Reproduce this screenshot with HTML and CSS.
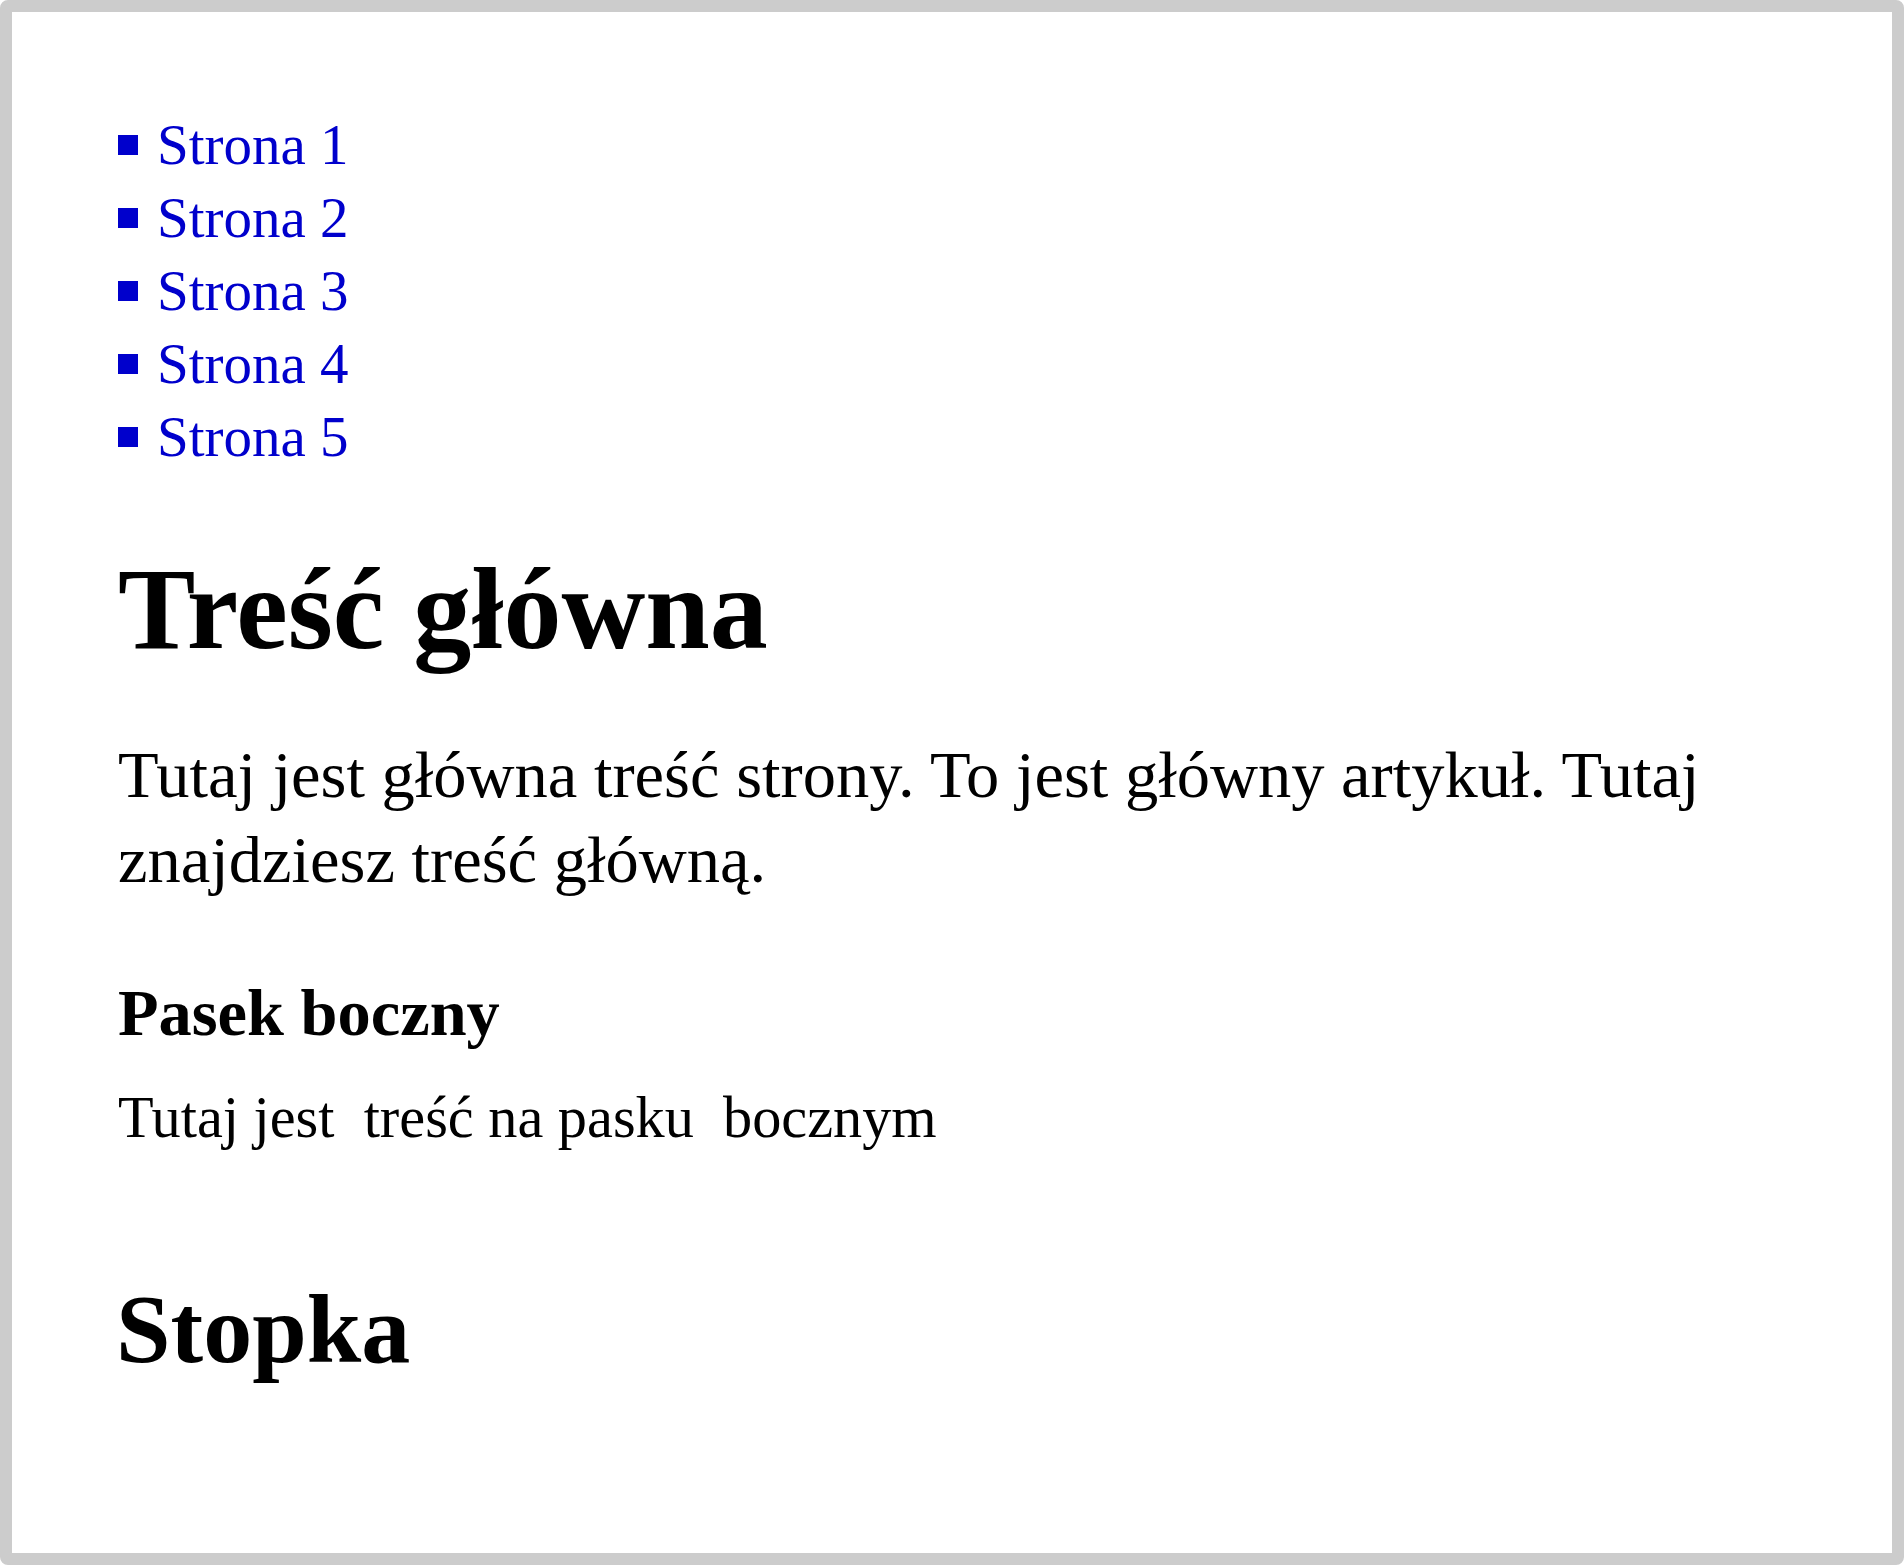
FILE: index.html
```html
<!DOCTYPE html>
<html lang="pl">
<head>
<meta charset="utf-8">
<title>Strona</title>
<link rel="stylesheet" href="styles.css">
</head>
<body>
<nav class="nav">
  <ul class="nav-list">
    <li class="nav-item"><a class="nav-link" href="#">Strona 1</a></li>
    <li class="nav-item"><a class="nav-link" href="#">Strona 2</a></li>
    <li class="nav-item"><a class="nav-link" href="#">Strona 3</a></li>
    <li class="nav-item"><a class="nav-link" href="#">Strona 4</a></li>
    <li class="nav-item"><a class="nav-link" href="#">Strona 5</a></li>
  </ul>
</nav>
<main class="main">
  <article class="article">
    <h1 class="title">Treść główna</h1>
    <p class="lead">Tutaj jest główna treść strony. To jest główny artykuł. Tutaj znajdziesz treść główną.</p>
  </article>
  <aside class="aside">
    <h3 class="aside-title">Pasek boczny</h3>
    <p class="aside-text">Tutaj jest &nbsp;treść na pasku &nbsp;bocznym</p>
  </aside>
</main>
<footer class="footer">
  <h2 class="footer-title">Stopka</h2>
</footer>
</body>
</html>
```

FILE: styles.css
```css
html {
  margin: 0;
  padding: 0;
  background: #ffffff;
}

body {
  margin: 0;
  box-sizing: border-box;
  min-height: 100vh;
  border: 12px solid #cccccc;
  border-radius: 8px;
  padding: 96px 106px 0 106px;
  font-family: "Liberation Serif", "Times New Roman", serif;
  color: #000000;
  background: #ffffff;
}

.nav-list {
  list-style: none;
  margin: 0;
  padding: 0;
}

.nav-item {
  display: flex;
  align-items: center;
  font-size: 57px;
  line-height: 73px;
}

.nav-item::before {
  content: "";
  width: 20px;
  height: 20px;
  background: #0000cc;
  margin-right: 19px;
  flex: none;
}

.nav-link {
  color: #0000cc;
  text-decoration: none;
}

.title {
  margin: 70px 0 0 0;
  font-size: 116px;
  line-height: 133px;
  font-weight: bold;
}

.lead {
  margin: 56px 0 0 0;
  font-size: 66.5px;
  line-height: 85px;
  max-width: 1640px;
}

.aside-title {
  margin: 73px 0 0 0;
  font-size: 66.4px;
  line-height: 76px;
  font-weight: bold;
}

.aside-text {
  margin: 33px 0 0 0;
  font-size: 58.3px;
  line-height: 67px;
}

.footer-title {
  margin: 122px 0 0 -2px;
  font-size: 98px;
  line-height: 112px;
  font-weight: bold;
}
```
